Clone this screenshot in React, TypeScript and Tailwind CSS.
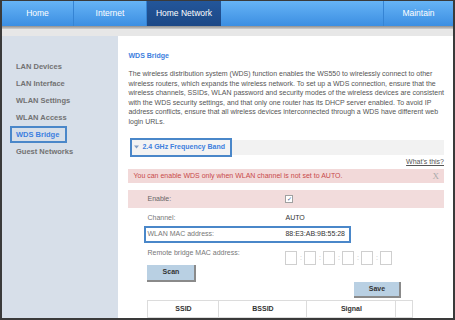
import React from "react";

const sans = { fontFamily: '"Liberation Sans", Arial, sans-serif' };

export default function App() {
  const lines = [
    "The wireless distribution system (WDS) function enables the WS550 to wirelessly connect to other",
    "wireless routers, which expands the wireless network. To set up a WDS connection, ensure that the",
    "wireless channels, SSIDs, WLAN password and security modes of the wireless devices are consistent",
    "with the WDS security settings, and that only one router has its DHCP server enabled. To avoid IP",
    "address conflicts, ensure that all wireless devices interconnected through a WDS have different web",
    "login URLs.",
  ];
  const side = ["LAN Devices", "LAN Interface", "WLAN Settings", "WLAN Access", "WDS Bridge", "Guest Networks"];
  return (
    <div
      className="w-[455px] h-[320px] overflow-hidden bg-white border-l-2 border-r-2 border-t border-b-2 border-[#3a3a3a] flex flex-col"
      style={sans}
    >
      {/* nav */}
      <div className="h-[25px] flex bg-gradient-to-b from-[#66b4f6] to-[#3b8ee2] text-white text-[8.5px]">
        <div className="w-[72px] flex items-center justify-center border-r border-[#3584d4]">Home</div>
        <div className="w-[73px] flex items-center justify-center border-r border-[#3584d4]">Internet</div>
        <div className="w-[74px] flex items-center justify-center bg-gradient-to-b from-[#23569a] to-[#1c4886]">Home Network</div>
        <div className="flex-1 border-r border-[#3584d4]"></div>
        <div className="w-[69px] flex items-center justify-center">Maintain</div>
      </div>
      <div className="h-[3px] bg-gradient-to-b from-[#8f8f8f] to-[#cfcfcf]"></div>
      <div className="h-[7px] bg-[#e7e7e7]"></div>
      <div className="flex-1 flex min-h-0">
        {/* sidebar */}
        <div className="w-[118px] bg-[#d7dfe9] pt-[22px] pl-[8px]">
          {side.map((s) => (
            <div key={s} className="h-[17px] flex items-center">
              {s === "WDS Bridge" ? (
                <div className="h-[17px] w-[57px] border-2 border-[#4a87c9] flex items-center pl-[4px] text-[7.5px] font-bold text-[#3c7fe0]">
                  {s}
                </div>
              ) : (
                <div className="pl-[6px] text-[7.5px] font-bold text-[#727272]">{s}</div>
              )}
            </div>
          ))}
        </div>
        {/* main */}
        <div className="flex-1 bg-white mt-[1px] pl-[10px] pr-[9px] flex flex-col">
          <div className="mt-[14px] h-[9px] leading-[9px] text-[7px] font-bold text-[#3d80de]">WDS Bridge</div>
          <div className="mt-[9px] text-[7px] leading-[9.6px] text-[#555]">
            {lines.map((l) => (
              <div key={l} className="whitespace-nowrap">{l}</div>
            ))}
          </div>
          <div className="mt-[11px] h-[19px] flex items-center ml-[2px]">
            <div className="w-[102px] h-[19px] border-2 border-[#4a87c9] bg-[#f3f3f3] flex items-center pl-[2px] text-[7px] font-bold text-[#3d80de]">
              <svg width="5" height="4" viewBox="0 0 5 4" className="mr-[3px]">
                <path d="M0 0.5 L5 0.5 L2.5 3.5 Z" fill="#7f9cc4" />
              </svg>
              2.4 GHz Frequency Band
            </div>
            <div className="flex-1 h-[15px] bg-[#f2f2f2]"></div>
          </div>
          <div className="h-[12px] flex items-center justify-end text-[7px] text-[#555]">
            <span className="underline">What's this?</span>
          </div>
          <div className="mt-[1px] h-[14px] bg-[#f2d9d9] flex items-center justify-between pl-[5px] pr-[5px] text-[7px] text-[#c84a4a]">
            <span>You can enable WDS only when WLAN channel is not set to AUTO.</span>
            <span className="text-[9px] text-[#a9a9a9]" style={{ fontFamily: '"Liberation Serif", serif' }}>X</span>
          </div>
          <div className="mt-[7px] h-[18px] bg-[#f2dcdc] flex items-center text-[7px] text-[#666]">
            <span className="w-[157px] pl-[19px]">Enable:</span>
            <span className="w-[8px] h-[8px] border border-[#a0a0a0] bg-white flex items-center justify-center text-[6px] leading-none text-[#3a5a8a]">✓</span>
          </div>
          <div className="h-[18px] pt-[2px] flex items-center text-[7px]">
            <span className="w-[157px] pl-[19px] text-[#777]">Channel:</span>
            <span className="text-[#333]">AUTO</span>
          </div>
          <div className="ml-[16px] w-[207px] h-[17px] border-2 border-[#4a87c9] flex items-center text-[7px]">
            <span className="w-[139px] pl-[1px] text-[#777]">WLAN MAC address:</span>
            <span className="text-[#333]">88:E3:AB:9B:55:28</span>
          </div>
          <div className="h-[22px] flex items-start text-[7px]">
            <span className="w-[157px] pl-[19px] text-[#777] mt-[5px]">Remote bridge MAC address:</span>
            <div className="flex items-center mt-[8px]">
              {[0, 1, 2, 3, 4, 5].map((i) => (
                <React.Fragment key={i}>
                  {i > 0 && <span className="w-[7px] text-center text-[#bbb]">:</span>}
                  <span className="w-[12px] h-[14px] border border-[#cfcfcf] bg-white"></span>
                </React.Fragment>
              ))}
            </div>
          </div>
          <div className="flex">
            <div className="ml-[19px] w-[49px] h-[17px] bg-[#b9d0e3] border-r-2 border-b-2 border-[#8a8a8a] flex items-center justify-center text-[7px] font-bold text-[#333]">
              Scan
            </div>
          </div>
          <div className="flex">
            <div className="ml-[226px] w-[47px] h-[16px] bg-[#b9d0e3] border-r-2 border-b-2 border-[#8a8a8a] flex items-center justify-center text-[7px] font-bold text-[#333]">
              Save
            </div>
          </div>
          <div className="mt-[2px] ml-[19px] flex h-[18px] border border-[#dcdcdc] w-[266px] text-[7px] font-bold text-[#333]">
            <div className="w-[71px] border-r border-[#dcdcdc] flex items-center justify-center">SSID</div>
            <div className="w-[88px] border-r border-[#dcdcdc] flex items-center justify-center">BSSID</div>
            <div className="w-[89px] border-r border-[#dcdcdc] flex items-center justify-center">Signal</div>
            <div className="flex-1"></div>
          </div>
        </div>
      </div>
    </div>
  );
}
